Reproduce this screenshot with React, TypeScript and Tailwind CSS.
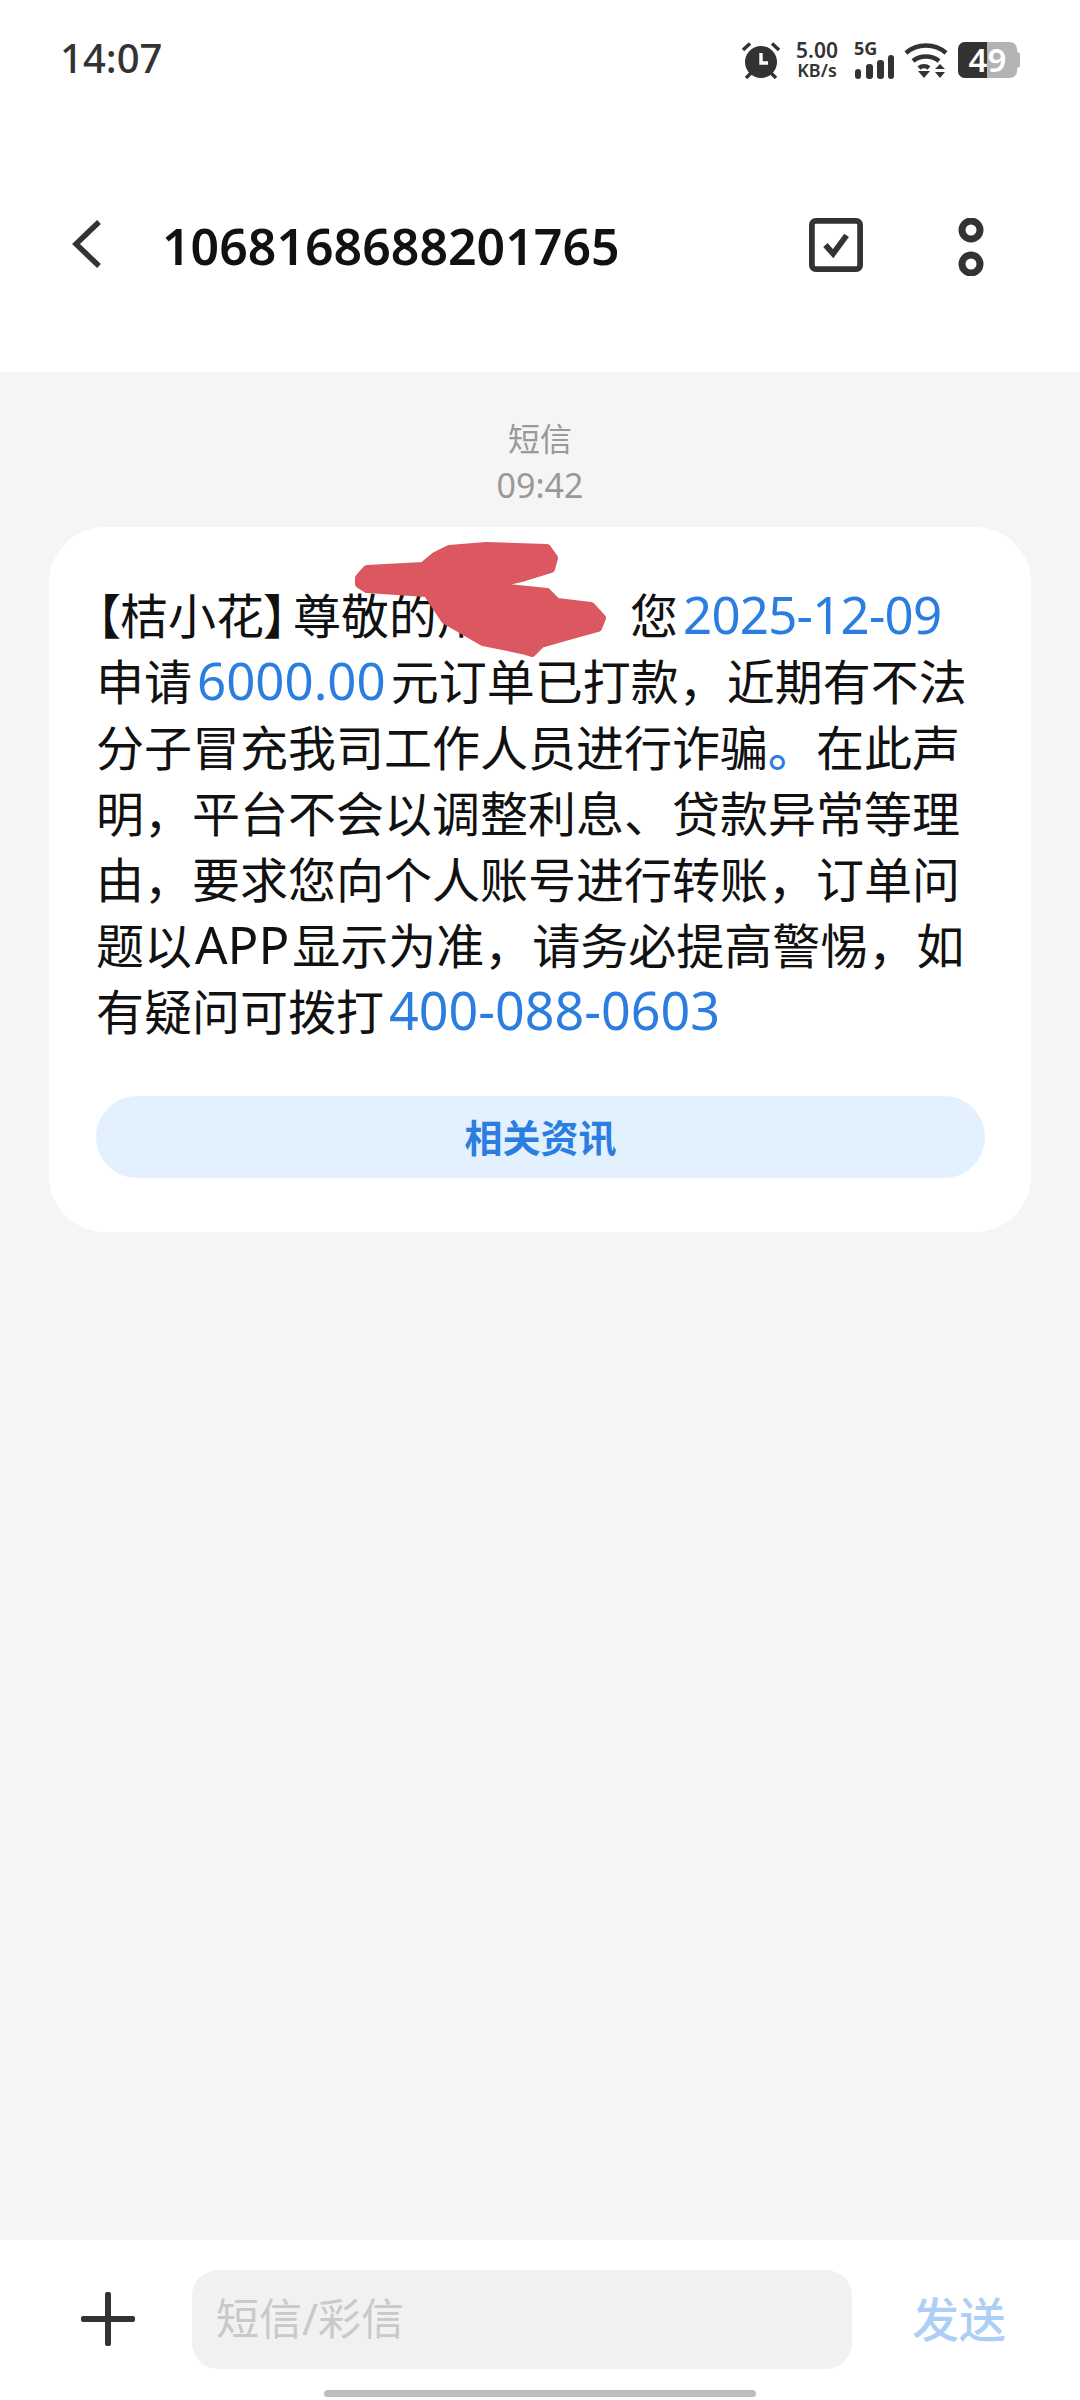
const font = { fontFamily: '"Noto Sans", "Noto Sans CJK SC", sans-serif' };

function AlarmIcon() {
  return (
    <svg width="38" height="37" viewBox="0 0 38 37" fill="none">
      <circle cx="19" cy="20" r="16" fill="#333" />
      <path d="M19 11v10h7" stroke="#fff" strokeWidth="3.4" />
      <path d="M1 8 8 1.500M37 8 30 1.500M4 36l5-5M34 36l-5-5" stroke="#333" strokeWidth="3.400" />
    </svg>
  );
}

function SignalIcon() {
  return (
    <svg width="40" height="25" viewBox="0 0 40 25" fill="#333">
      <rect x="1" y="14" width="6" height="10" rx="3" />
      <rect x="12" y="9" width="7" height="15" rx="3" />
      <rect x="23" y="5" width="7" height="19" rx="3" />
      <rect x="34" y="0" width="6" height="24" rx="3" />
    </svg>
  );
}

function WifiIcon() {
  return (
    <svg width="44" height="37" viewBox="0 0 44 37" fill="none" stroke="#333" strokeWidth="4.5">
      <path d="M2 11C13 1 31 1 42 11" />
      <path d="M9 19c7-6 19-6 26 0" />
      <path d="M15 26c3-2.500 7-2.500 10 0" />
      <path d="M14 29h12l-6 7z" fill="#333" stroke="none" />
      <path d="M31 27l5-5 5 5zM31 30h10l-5 6z" fill="#333" stroke="none" />
    </svg>
  );
}

function Battery() {
  return (
    <div className="flex items-center">
      <div className="relative flex h-[36px] w-[59px] rounded-[7px] bg-[#b3b3b3]">
        <div className="h-full w-[29px] rounded-l-[7px] bg-[#333]" />
        <div className="absolute inset-0 flex items-center justify-center text-[33px] leading-[36px] font-semibold text-white">
          49
        </div>
      </div>
      <div className="h-[16px] w-[3px] rounded-r-sm bg-[#b3b3b3]" />
    </div>
  );
}

function StatusBar() {
  return (
    <div className="flex h-[112px] items-start justify-between pt-[36px] pr-[60px] pl-[60px]">
      <div className="text-[40px] leading-[44px] font-medium text-[#333]">14:07</div>
      <div className="flex items-center pt-[4px]">
        <AlarmIcon />
        <div className="ml-[13px] flex w-[48px] flex-col items-center text-[#333]">
          <div className="text-[21px] leading-[21px] font-semibold">5.00</div>
          <div className="text-[18px] leading-[19px] font-semibold">KB/s</div>
        </div>
        <div className="ml-[13px] flex w-[40px] flex-col items-start">
          <div className="text-[18px] leading-[14px] font-bold text-[#333]">5G</div>
          <SignalIcon />
        </div>
        <div className="ml-[10px]">
          <WifiIcon />
        </div>
        <div className="ml-[10px]">
          <Battery />
        </div>
      </div>
    </div>
  );
}

function Header() {
  return (
    <div className="flex h-[260px] items-start bg-white pt-[106px] pr-[96px] pl-[70px]">
      <svg width="34" height="50" viewBox="0 0 34 50" fill="none" className="mt-[1px]">
        <path d="M29 3 6 25l23 22" stroke="#333" strokeWidth="5.500" />
      </svg>
      <div className="ml-[58px] flex-1 text-[50px] leading-[56px] font-semibold text-[#111]">1068168688201765</div>
      <svg width="54" height="54" viewBox="0 0 56 56" fill="none" className="mr-[2px]">
        <rect x="3" y="3" width="50" height="50" rx="4" stroke="#333" strokeWidth="6" />
        <path d="M17 28l8 9 14-19" stroke="#333" strokeWidth="6" />
      </svg>
      <svg width="26" height="58" viewBox="0 0 26 58" fill="none" className="ml-[93px]">
        <circle cx="13" cy="12" r="9" stroke="#333" strokeWidth="7" />
        <circle cx="13" cy="46" r="9" stroke="#333" strokeWidth="7" />
      </svg>
    </div>
  );
}

// the hand-drawn smear over the name
function Smear() {
  return (
    <svg
      width="252"
      height="116"
      viewBox="0 0 252 116"
      className="absolute top-[15px] left-[306px]"
      fill="#db5860"
      stroke="#db5860"
      strokeWidth="8"
      strokeLinejoin="round"
    >
      <path d="M4 36 12 27 68 24 80 14 94 7 131 4 192 6 199 16 196 27 170 35 134 44 192 50 202 60 236 64 247 76 243 86 214 94 186 102 177 111 167 108 128 100 90 78 72 51 12 47 4 42Z" />
    </svg>
  );
}

function Blue({ children, className }: { children: React.ReactNode; className?: string }) {
  return <span className={"mx-[5px] leading-none text-[#2b7de0] " + (className || "text-[51px]")}>{children}</span>;
}

function MessageCard() {
  return (
    <div className="relative mx-[49px] rounded-[56px] bg-white pt-[56px] pr-[46px] pb-[54px] pl-[47px]">
      <div className="text-[48px] leading-[66px] whitespace-nowrap text-[#111]">
        <div>
          <span className="[font-feature-settings:'palt']">【桔小花】</span>
          <span className="ml-[5px]">尊敬的用户，</span>
          <span className="ml-[49px]">您</span>
          <Blue className="text-[51px] tracking-[-0.8px]">2025-12-09</Blue>
        </div>
        <div>
          申请<Blue>6000.00</Blue>元订单已打款，近期有不法
        </div>
        <div>
          分子冒充我司工作人员进行诈骗<span className="font-medium text-[#2b7de0]">。</span>在此声
        </div>
        <div>明，平台不会以调整利息、贷款异常等理</div>
        <div>由，要求您向个人账号进行转账，订单问</div>
        <div>
          题以<span className="mx-[3px] text-[51px] leading-none">APP</span>显示为准，请务必提高警惕，如
        </div>
        <div>
          有疑问可拨打<Blue className="text-[52px]">400-088-0603</Blue>
        </div>
      </div>
      <div className="mt-[51px] flex h-[82px] items-center justify-center rounded-full bg-[#e3f0fd] text-[38px] font-semibold text-[#2b7de0]">
        相关资讯
      </div>
      <Smear />
    </div>
  );
}

function Composer() {
  return (
    <div className="relative flex h-[160px] items-start bg-white pt-[30px]">
      <svg width="54" height="54" viewBox="0 0 54 54" className="mt-[22px] ml-[81px]" fill="#333">
        <rect x="24" y="0" width="6" height="54" rx="2" />
        <rect x="0" y="24" width="54" height="6" rx="2" />
      </svg>
      <div className="ml-[57px] flex h-[99px] w-[660px] items-center rounded-[26px] bg-[#f1f1f1] pl-[24px] text-[43px] text-[#c9c9c9]">
        短信/彩信
      </div>
      <div className="ml-[60px] pt-[14px] text-[47px] leading-[70px] font-medium text-[#aecff5]">发送</div>
      <div className="absolute bottom-[3px] left-[324px] h-[7px] w-[432px] rounded-full bg-[#bdbdbd]" />
    </div>
  );
}

export default function App() {
  return (
    <div className="flex h-[2400px] w-[1080px] flex-col overflow-hidden bg-white" style={font}>
      <StatusBar />
      <Header />
      <div className="flex flex-1 flex-col bg-[#f5f5f5]">
        <div className="mt-[44px] mb-[19px] text-center text-[32px] leading-[46px] text-[#999]">
          <div>短信</div>
          <div className="text-[34px]">09:42</div>
        </div>
        <MessageCard />
      </div>
      <Composer />
    </div>
  );
}
